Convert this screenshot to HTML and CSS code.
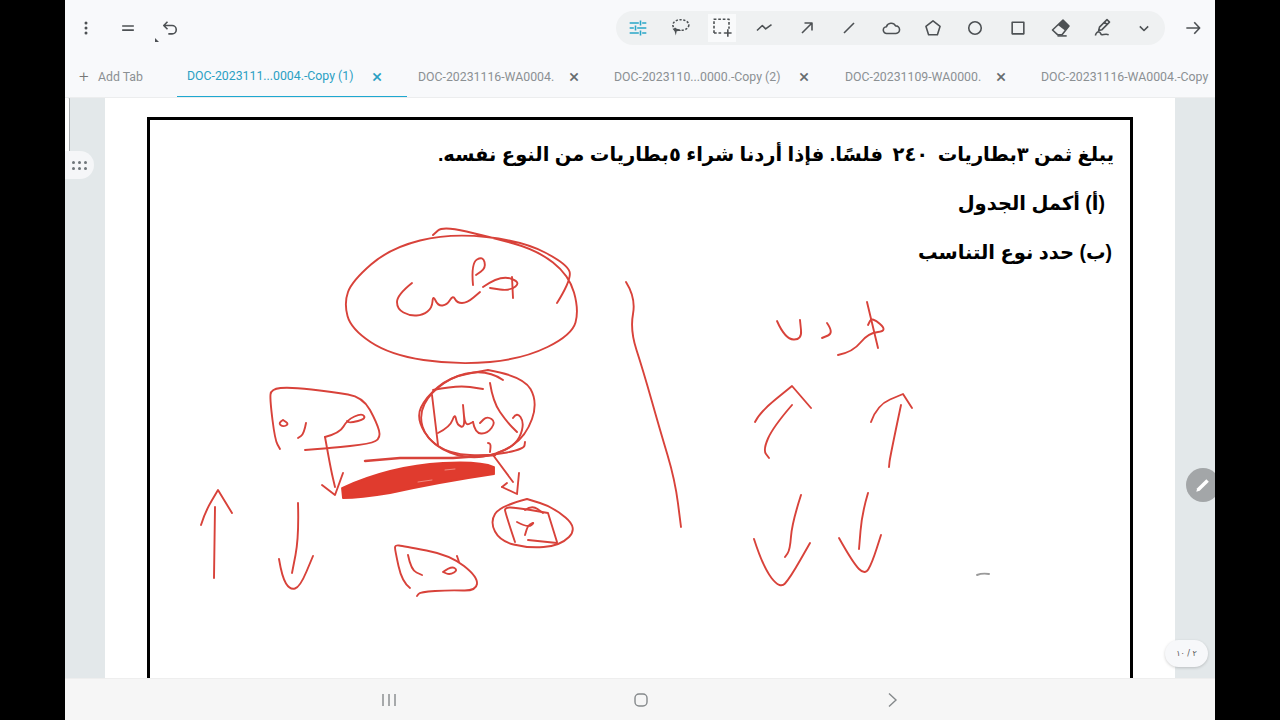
FILE: index.html
```html
<!DOCTYPE html>
<html lang="ar">
<head>
<meta charset="utf-8">
<title>DOC-20231116-WA0004</title>
<link rel="stylesheet" href="styles.css">
</head>
<body>
<div class="app" dir="ltr">
  <div class="toolbar">
    <button class="tool">
      <svg class="icon" viewBox="0 0 24 24"><circle cx="12" cy="6" r="1.8" class="dot"/><circle cx="12" cy="12" r="1.8" class="dot"/><circle cx="12" cy="18" r="1.8" class="dot"/></svg>
    </button>
    <button class="tool">
      <svg class="icon" viewBox="0 0 24 24"><path d="M5 9.500h14M5 14.500h14"/></svg>
    </button>
    <button class="tool undo">
      <svg class="icon" viewBox="0 0 24 24"><path d="M9 4.500 4.500 9 9 13.500M5 9h9.500a5 5 0 0 1 0 10H10"/></svg>
      <i class="corner"></i>
    </button>
    <div class="pill">
      <button class="tool">
        <svg class="icon active" viewBox="0 0 24 24"><path d="M2 6h11M17 6h5M15 3v6M2 12h5M11 12h11M9 9v6M2 18h11M17 18h5M15 15v6"/></svg>
      </button>
      <button class="tool">
        <svg class="icon" viewBox="0 0 24 24"><ellipse cx="13" cy="8.400" rx="9.600" ry="6.400" stroke-dasharray="2.600 1.900"/><path d="M3 13c3-1 7 0 11 2l-6 1-1 5-1.500-5z" class="solid"/></svg>
      </button>
      <button class="tool picked">
        <svg class="icon" viewBox="0 0 24 24"><path stroke-dasharray="3.200 2.200" d="M2.400 18V1.500h18V13M2.400 18h11"/><path d="M19 13.500v9M14.500 18h9"/></svg>
      </button>
      <button class="tool">
        <svg class="icon" viewBox="0 0 24 24"><path d="M3.600 15 10 9l4 4 7-5"/></svg>
      </button>
      <button class="tool">
        <svg class="icon" viewBox="0 0 24 24"><path d="M6 18 18 6M9 6h9v9"/></svg>
      </button>
      <button class="tool">
        <svg class="icon" viewBox="0 0 24 24"><path d="M6 18 18 6"/></svg>
      </button>
      <button class="tool">
        <svg class="icon" viewBox="0 0 24 24"><path d="M7 18.500a4 4 0 0 1-.5-8 6 6 0 0 1 11-1 4.500 4.500 0 0 1 .5 9z"/></svg>
      </button>
      <button class="tool">
        <svg class="icon" viewBox="0 0 24 24"><path d="m12 3.500 8.500 6.500-3.200 10H6.700L3.500 10z"/></svg>
      </button>
      <button class="tool">
        <svg class="icon" viewBox="0 0 24 24"><circle cx="12" cy="12" r="7.500"/></svg>
      </button>
      <button class="tool">
        <svg class="icon" viewBox="0 0 24 24"><path d="M5 5h14v14H5z"/></svg>
      </button>
      <button class="tool">
        <svg class="icon" viewBox="0 0 24 24"><path d="M15.600 2.400 22.800 9.600 14.400 20 9 20 3 14.400z"/><path d="M15.600 2.400 22.800 9.600 18 15 9.500 8.500z" class="solid"/><path d="M9 21.500h11"/></svg>
      </button>
      <button class="tool">
        <svg class="icon" viewBox="0 0 24 24"><path d="m8 15 1-4 9-9 3 3-9 9zM15 5l3 3"/><path d="M4 21c1-4 3-5 5-4s1 3 3 3 5-1 8 0"/></svg>
      </button>
      <button class="tool">
        <svg class="icon" viewBox="0 0 24 24"><path d="m7 10 5 5 5-5"/></svg>
      </button>
    </div>
    <button class="tool next">
      <svg class="icon" viewBox="0 0 24 24"><path d="M4 12h16M13.500 5l6.500 7-6.500 7"/></svg>
    </button>
  </div>

  <div class="tabbar">
    <div class="add-tab"><span class="plus">+</span>Add Tab</div>
    <div class="tab wide selected"><span class="tab-name">DOC-2023111...0004.-Copy (1)</span><span class="tab-close">&times;</span></div>
    <div class="tab"><span class="tab-name">DOC-20231116-WA0004.</span><span class="tab-close">&times;</span></div>
    <div class="tab wide"><span class="tab-name">DOC-2023110...0000.-Copy (2)</span><span class="tab-close">&times;</span></div>
    <div class="tab"><span class="tab-name">DOC-20231109-WA0000.</span><span class="tab-close">&times;</span></div>
    <div class="tab wide"><span class="tab-name">DOC-20231116-WA0004.-Copy</span></div>
  </div>

  <div class="viewer">
    <div class="page">
      <div class="frame">
        <div class="question" dir="rtl">
          <p class="line-one">يبلغ ثمن ٣بطاريات <span class="digits">٢٤٠</span> فلسًا. فإذا أردنا شراء ٥بطاريات من النوع نفسه.</p>
          <p class="line-two">(أ) أكمل الجدول</p>
          <p class="line-three">(ب) حدد نوع التناسب</p>
        </div>
        <svg id="ink" class="ink" viewBox="150 120 980 560"></svg>
      </div>
    </div>

    <div class="side-tab"></div>
    <div class="grip">
      <span></span><span></span><span></span><span></span><span></span><span></span>
    </div>
    <div class="pen-fab">
      <svg viewBox="0 0 24 24"><path d="M4 20l1-4L16 5l3 3L8 19z"/></svg>
    </div>
    <div class="page-count" dir="rtl">٢ / ١٠</div>
  </div>

  <div class="navbar">
    <svg class="nav-icon recents" viewBox="0 0 16 14"><path d="M2 1v12M8 1v12M14 1v12"/></svg>
    <svg class="nav-icon home" viewBox="0 0 16 16"><rect x="2" y="2" width="12" height="12" rx="4"/></svg>
    <svg class="nav-icon back" viewBox="0 0 12 16"><path d="m2 1.500 7 6.500-7 6.500"/></svg>
  </div>
</div>
<script src="ink.js"></script>
</body>
</html>
```

FILE: styles.css
```css
* {
  box-sizing: border-box;
}

html, body {
  margin: 0;
  height: 100%;
  background-color: #000;
  overflow: hidden;
}

.app {
  width: 1150px;
  height: 720px;
  margin: 0 auto;
  display: flex;
  flex-direction: column;
  font-family: Roboto, "Liberation Sans", sans-serif;
  background-color: #f8f9fb;
}

/* top toolbar */
.toolbar {
  height: 56px;
  flex: none;
  display: flex;
  align-items: center;
  padding-right: 1px;
}

.tool {
  width: 42.2px;
  height: 28px;
  flex: none;
  display: flex;
  align-items: center;
  justify-content: center;
  padding: 0;
  border: none;
  background: none;
  position: relative;
}

.icon {
  width: 20px;
  height: 20px;
  overflow: visible;
  fill: none;
  stroke: #4d5154;
  stroke-width: 1.9;
  stroke-linejoin: round;
}

.icon .dot,
.icon .solid {
  fill: #4d5154;
  stroke: none;
}

.icon.active {
  stroke: #2aa6c8;
}

.corner {
  position: absolute;
  left: 6px;
  bottom: 0;
  width: 0;
  height: 0;
  border-left: 4px solid #4d5154;
  border-top: 4px solid transparent;
}

.pill {
  margin-left: auto;
  width: 549px;
  height: 34px;
  padding-left: 1px;
  display: flex;
  align-items: center;
  border-radius: 17px;
  background-color: #eff1f2;
}

.picked {
  background: linear-gradient(#f9fafb, #f9fafb) center / 28px 28px no-repeat;
}

.next {
  margin-left: 7px;
}

/* tabs */
.tabbar {
  height: 42px;
  flex: none;
  display: flex;
  align-items: stretch;
  overflow: hidden;
  border-bottom: 1px solid #ecedee;
  font-size: 12.3px;
  color: #8b9093;
}

.add-tab {
  width: 112px;
  flex: none;
  display: flex;
  align-items: center;
  padding: 0 0 0 14px;
}

.plus {
  width: 19px;
  font-size: 17px;
  line-height: 17px;
  font-weight: 300;
  color: #777;
}

.tab {
  width: 197px;
  flex: none;
  display: flex;
  align-items: center;
  padding: 0 20px 0 11px;
  white-space: nowrap;
}

.tab.wide {
  width: 230px;
  padding-left: 10px;
}

.tab-name {
  flex: 1;
}

.tab-close {
  width: 20px;
  text-align: center;
  font-size: 19px;
  line-height: 19px;
  color: #666b6e;
}

.selected {
  margin-bottom: -1px;
  border-bottom: 2px solid #1ea8d0;
  color: #2ba0c3;
}

.selected .tab-close {
  color: #2ba0c3;
}

/* document area */
.viewer {
  flex: 1;
  min-height: 0;
  position: relative;
  overflow: hidden;
  padding: 0 40px;
  background-color: #e3e8ea;
}

.page {
  height: 100%;
  padding: 19px 42px 0;
  background-color: #fff;
}

.frame {
  height: 620px;
  position: relative;
  border: 3px solid #000;
}

.question {
  padding: 16px 16px 0 0;
  font-family: "Liberation Sans", "DejaVu Sans", sans-serif;
  font-size: 19.5px;
  font-weight: bold;
  color: #000;
}

.question p {
  margin: 0 0 13px;
  height: 36px;
  line-height: 36px;
  white-space: nowrap;
}

.question .line-two {
  padding-right: 9px;
}

.question .line-three {
  padding-right: 2px;
}

.digits {
  letter-spacing: 5px;
  padding: 0 4px;
}

.ink {
  position: absolute;
  left: 0;
  top: 0;
  width: 980px;
  height: 560px;
  overflow: visible;
  fill: none;
  stroke: #d8423a;
  stroke-width: 1.9;
  stroke-linecap: round;
  stroke-linejoin: round;
}

.side-tab {
  position: absolute;
  left: -1px;
  top: -2px;
  width: 6px;
  height: 66px;
  border: 1px solid #a9adaf;
  border-radius: 0 3px 3px 0;
  background-color: #fff;
}

.grip {
  position: absolute;
  left: 0;
  top: 53px;
  width: 29px;
  height: 28px;
  padding: 9px 5px 9px 7px;
  display: grid;
  grid-template-columns: repeat(3, 3px);
  gap: 3px;
  align-content: center;
  border-radius: 0 14px 14px 0;
  background-color: #f5f6f8;
}

.grip span {
  width: 3px;
  height: 3px;
  border-radius: 50%;
  background-color: #70767a;
}

.pen-fab {
  position: absolute;
  left: 1121px;
  top: 370px;
  width: 34px;
  height: 34px;
  padding: 7px;
  border-radius: 50%;
  background-color: #a3a6a8;
}

.pen-fab svg {
  display: block;
  width: 20px;
  height: 20px;
  fill: #fff;
}

.page-count {
  position: absolute;
  left: 1100px;
  top: 542px;
  width: 43px;
  height: 27px;
  border-radius: 14px;
  background-color: #f7f8fa;
  box-shadow: 0 1px 3px rgba(0, 0, 0, .18);
  text-align: center;
  font-family: "DejaVu Sans", sans-serif;
  font-size: 8px;
  line-height: 27px;
  color: #555;
}

/* android nav */
.navbar {
  height: 42px;
  flex: none;
  position: relative;
  z-index: 1;
  display: flex;
  align-items: center;
  padding-left: 316px;
  background-color: #f6f6f6;
  border-top: 1px solid #eeeeee;
}

.nav-icon {
  fill: none;
  stroke: #85898b;
  stroke-width: 1.4;
  flex: none;
}

.recents {
  width: 16px;
  height: 14px;
}

.home {
  width: 16px;
  height: 16px;
  margin-left: 236px;
}

.back {
  width: 12px;
  height: 16px;
  margin-left: 238px;
}
```

FILE: ink.js
```js
// pen strokes of the annotation layer, in screen coordinates
// a point given twice stays a sharp corner
var strokes = [
  // big circle
  [[557,303],[572,279],[567,264],[523,241],[450,233],[390,248],[352,281],[344,303],[351,329],[390,355],[457,365],[523,359],[572,335],[579,310],[569,275],[537,250],[490,237],[443,226],[433,235]],
  [[412,283],[397,295],[397,309],[410,316],[423,315],[432,308],[433,295],[438,306],[447,305],[453,295],[457,303],[467,303],[480,292]],
  [[473,285],[471,263],[483,256],[486,268],[476,275]],
  [[483,287],[500,275],[521,282],[510,291],[490,288]],
  [[512,277],[513,298]],
  // box on the left
  [[280,449],[280,449],[275,440],[270,400],[271,389],[290,387],[333,392],[363,397],[377,423],[381,438],[370,444],[330,448],[305,450]],
  [[283,420],[278,423],[283,427],[289,424],[283,420]],
  [[306,423],[304,434],[298,438]],
  [[325,437],[340,433],[347,420],[362,413],[366,419],[350,423],[347,421]],
  [[325,437],[325,437],[331,470],[335,487]],
  [[322,485],[335,495],[335,495],[343,473]],
  // circled box
  [[488,370],[523,376],[538,402],[526,436],[500,454],[467,459],[433,446],[416,418],[426,397],[450,377],[488,370]],
  [[503,380],[490,371],[457,374],[430,393],[419,415],[426,438],[450,454],[490,456],[524,449],[525,442]],
  [[432,395],[432,395],[438,445]],
  [[433,390],[457,385],[483,389]],
  [[490,383],[493,402],[507,422],[517,432]],
  [[513,418],[517,412],[524,422],[520,438],[510,448],[497,453]],
  [[438,433],[450,427],[455,413],[457,425],[465,428],[463,405],[463,405],[465,426],[473,422]],
  [[473,422],[475,433],[487,434],[496,422],[487,416],[480,423]],
  [[488,443],[491,443],[490,452]],
  [[493,455],[513,482]],
  [[502,487],[507,483]],
  [[502,487],[517,494],[517,494],[519,473]],
  // circled three
  [[527,499],[500,506],[490,522],[500,541],[527,548],[560,546],[578,528],[553,507],[527,499]],
  [[515,542],[505,512],[505,508],[513,507],[548,513],[548,513],[557,542]],
  [[528,540],[557,543]],
  [[517,522],[528,528],[535,522],[528,525],[525,535]],
  [[525,510],[532,505],[543,513]],
  // arrows under the circle
  [[214,578],[215,507]],
  [[201,525],[205,512],[218,490],[218,490],[232,513]],
  [[298,503],[299,537],[292,573]],
  [[279,559],[282,577],[290,590],[300,587],[313,556]],
  // lower box
  [[410,588],[402,582],[395,550],[395,545],[403,546],[450,555],[478,577],[476,591],[450,590],[420,592],[417,596]],
  [[408,555],[411,570],[422,575]],
  [[443,572],[451,566],[458,570],[450,575],[443,572]],
  [[457,556],[459,562]],
  // long divider
  [[626,282],[636,298],[630,330],[643,370],[660,430],[675,480],[681,527]],
  // word on the right
  [[777,321],[785,339],[802,340],[800,320]],
  [[827,323],[834,333],[822,338]],
  [[867,302],[878,348]],
  [[838,355],[853,352],[868,333],[888,331],[872,317],[868,325]],
  // right arrows
  [[755,422],[760,412],[792,386],[792,386],[811,408]],
  [[792,405],[773,427],[763,450],[769,458]],
  [[871,422],[877,405],[903,394],[903,394],[912,408]],
  [[901,405],[890,457],[889,467]],
  [[801,495],[792,523],[790,550],[785,557]],
  [[754,539],[763,567],[780,589],[790,578],[810,543]],
  [[868,493],[862,513],[859,549]],
  [[839,538],[853,563],[865,575],[872,563],[881,535]]
];

var svg = document.getElementById("ink");
var ns = "http://www.w3.org/2000/svg";

function addPath(d, cls) {
  var p = document.createElementNS(ns, "path");
  p.setAttribute("d", d);
  if (cls) p.setAttribute("style", cls);
  svg.appendChild(p);
}

// curve through the midpoints so the ink does not look like a polyline
strokes.forEach(function (pts) {
  var d = "M" + pts[0][0] + " " + pts[0][1];
  for (var i = 1; i < pts.length - 1; i++) {
    var mx = (pts[i][0] + pts[i + 1][0]) / 2;
    var my = (pts[i][1] + pts[i + 1][1]) / 2;
    d += "Q" + pts[i][0] + " " + pts[i][1] + " " + mx + " " + my;
  }
  var last = pts[pts.length - 1];
  d += "L" + last[0] + " " + last[1];
  addPath(d);
});

// the scribbled-over bar, its highlights and the grey dash
addPath("M342 488Q390 466 443 463Q480 461 494 467L494 474Q440 482 390 493Q360 498 343 498Z", "fill:#e03b2e;stroke:#e03b2e");
addPath("M365 461L400 458L453 458L495 455", "stroke-width:2.500");
addPath("M418 482L432 480M445 470L455 469", "stroke:#f08a80;stroke-width:1");
addPath("M977 575Q982 573 989 574", "stroke:#9a9a9a");
```
